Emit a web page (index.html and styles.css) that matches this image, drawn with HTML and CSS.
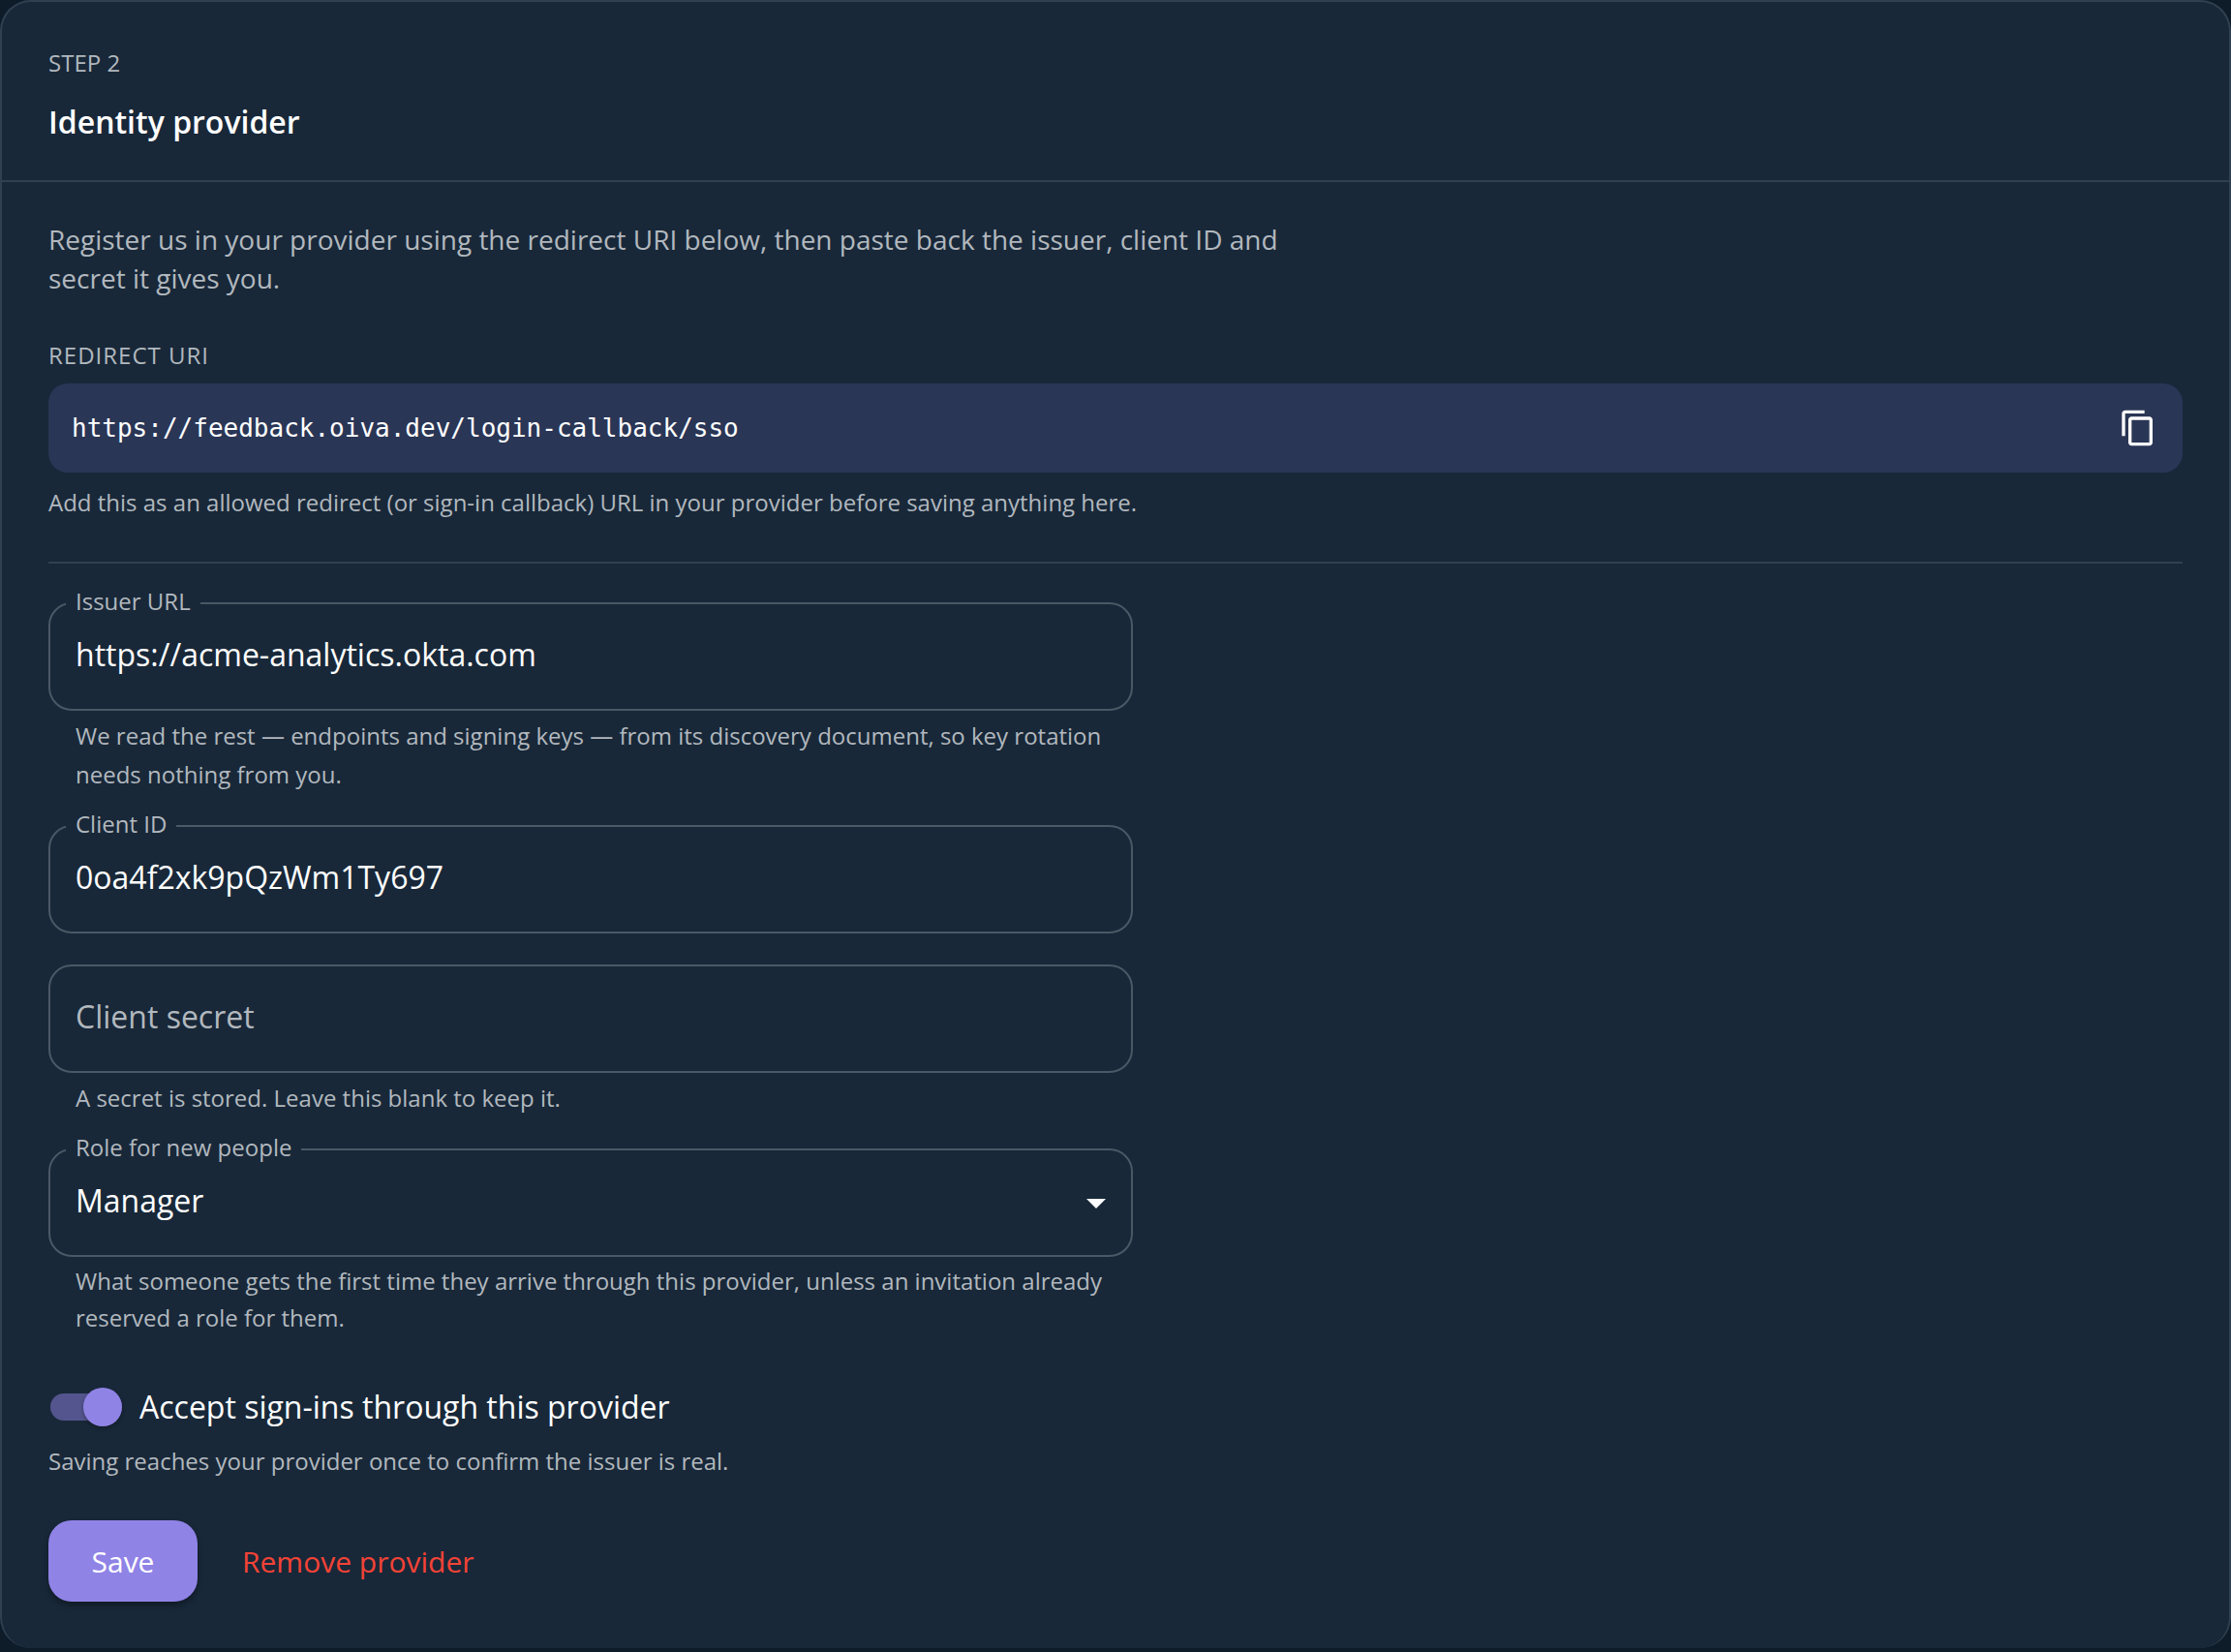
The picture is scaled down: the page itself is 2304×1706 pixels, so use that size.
FILE: index.html
```html
<!DOCTYPE html>
<html lang="en">
<head>
    <meta charset="UTF-8">
    <meta name="viewport" content="width=device-width, initial-scale=1.0">
    <link rel="stylesheet" href="styles.css">
    <title>Identity provider</title>
</head>
<body>
    <main class="card">
        <header class="cardHeader">
            <p class="step">STEP 2</p>
            <h1 class="title">Identity provider</h1>
        </header>

        <form class="cardBody">
            <p class="intro">Register us in your provider using the redirect URI below, then paste back the issuer, client ID and secret it gives you.</p>

            <section class="redirect">
                <h2 class="redirectLabel">REDIRECT URI</h2>
                <div class="redirectBox">
                    <code class="redirectUri">https://feedback.oiva.dev/login-callback/sso</code>
                    <button type="button" class="copyButton" aria-label="Copy">
                        <svg class="copyIcon" viewBox="0 0 24 24" fill="currentColor">
                            <path d="M16 1H4c-1.100 0-2 .9-2 2v14h2V3h12V1zm3 4H8c-1.100 0-2 .9-2 2v14c0 1.100.9 2 2 2h11c1.100 0 2-.9 2-2V7c0-1.100-.9-2-2-2zm0 16H8V7h11v14z"/>
                        </svg>
                    </button>
                </div>
                <p class="note">Add this as an allowed redirect (or sign-in callback) URL in your provider before saving anything here.</p>
            </section>

            <hr class="divider">

            <div class="fields">
                <div class="field">
                    <label class="fieldLabel" for="issuer">Issuer URL</label>
                    <input class="fieldInput" type="text" id="issuer" value="https://acme-analytics.okta.com">
                    <p class="helper helperTall">We read the rest — endpoints and signing keys — from its discovery document, so key rotation needs nothing from you.</p>
                </div>
                <div class="field">
                    <label class="fieldLabel" for="clientId">Client ID</label>
                    <input class="fieldInput" type="text" id="clientId" value="0oa4f2xk9pQzWm1Ty697">
                </div>
                <div class="field">
                    <input class="fieldInput" type="password" aria-label="Client secret" placeholder="Client secret">
                    <p class="helper helperTall">A secret is stored. Leave this blank to keep it.</p>
                </div>
                <div class="field">
                    <label class="fieldLabel" for="role">Role for new people</label>
                    <select class="fieldInput" id="role">
                        <option>Manager</option>
                    </select>
                    <svg class="arrow" viewBox="0 0 20 10" fill="currentColor">
                        <path d="M0 0h20L10 10z"/>
                    </svg>
                    <p class="helper">What someone gets the first time they arrive through this provider, unless an invitation already reserved a role for them.</p>
                </div>
            </div>

            <label class="switchRow">
                <input class="switch" type="checkbox" role="switch" checked>
                <span>Accept sign-ins through this provider</span>
            </label>
            <p class="note">Saving reaches your provider once to confirm the issuer is real.</p>

            <div class="actions">
                <button type="button" class="button save">Save</button>
                <button type="button" class="button remove">Remove provider</button>
            </div>
        </form>
    </main>
</body>
</html>
```
FILE: styles.css
```css
* {
    box-sizing: border-box;
}

body {
    margin: 0;
    background-color: #0e1b28;
    color: #ffffff;
    font-family: "Open Sans", "Noto Sans", sans-serif;
    font-size: 32px;
}

h1,
h2,
p {
    margin: 0;
    font-weight: 400;
}

button,
input,
select {
    font-family: inherit;
    color: inherit;
}

.card {
    background-color: #182839;
    border: 2px solid #2f4150;
    border-bottom: none;
    border-radius: 32px;
}

.cardHeader {
    padding: 42px 48px 36px;
    border-bottom: 2px solid #2f4150;
}

.step {
    color: #b2b8be;
    font-size: 24px;
    line-height: 42px;
}

.cardHeader .title {
    margin-top: 16px;
    font-size: 32px;
    font-weight: 600;
    line-height: 48px;
}

.cardBody {
    padding: 39px 48px 48px;
}

.intro {
    max-width: 1320px;
    color: #b2b8be;
    font-size: 28px;
    line-height: 40px;
}

.redirect {
    margin-top: 40px;
}

.redirectLabel {
    color: #b2b8be;
    font-size: 24px;
    letter-spacing: 1px;
    line-height: 40px;
}

.redirectBox {
    display: flex;
    align-items: center;
    justify-content: space-between;
    margin-top: 9px;
    padding: 16px;
    padding-left: 24px;
    background-color: #2a3656;
    border-radius: 20px;
}

.redirectUri {
    font-family: "DejaVu Sans Mono", monospace;
    font-size: 26px;
}

.copyButton {
    display: flex;
    padding: 10px;
    background: none;
    border: none;
}

.copyIcon {
    width: 40px;
    height: 40px;
}

.note {
    margin-top: 11px;
    color: #b2b8be;
    font-size: 24px;
    line-height: 40px;
}

.divider {
    height: 2px;
    margin: 41px 0 40px;
    background-color: #2f4150;
    border: none;
}

.fields {
    display: flex;
    flex-direction: column;
    gap: 32px;
    max-width: 1120px;
}

.field {
    position: relative;
}

.fieldLabel {
    position: absolute;
    top: -18px;
    left: 18px;
    padding: 0 10px;
    background-color: #182839;
    color: #b2b8be;
    font-size: 24px;
    line-height: 34px;
}

.fieldInput {
    display: block;
    width: 100%;
    height: 112px;
    padding: 0 26px 6px;
    appearance: none;
    background: none;
    border: 2px solid #4b5865;
    border-radius: 24px;
    font-size: 32px;
}

.fieldInput::placeholder {
    color: #b2b8be;
    opacity: 1;
}

.arrow {
    position: absolute;
    top: 52px;
    right: 28px;
    width: 20px;
    height: 10px;
    pointer-events: none;
}

.helper {
    padding: 6px 28px 0;
    color: #b2b8be;
    font-size: 24px;
    line-height: 38px;
}

.helperTall {
    line-height: 40px;
}

.switchRow {
    display: flex;
    align-items: center;
    gap: 18px;
    margin-top: 48px;
    padding-left: 2px;
    line-height: 50px;
}

.switch {
    display: flex;
    align-items: center;
    justify-content: flex-end;
    width: 74px;
    height: 28px;
    margin: 0;
    appearance: none;
    background-color: #54558e;
    border-radius: 14px;
}

.switch::before {
    content: "";
    width: 40px;
    height: 40px;
    background-color: #9083e6;
    border-radius: 50%;
    box-shadow: 0 2px 4px rgba(0, 0, 0, 0.3);
}

.actions {
    display: flex;
    gap: 16px;
    margin-top: 41px;
}

.button {
    height: 84px;
    background: none;
    border: none;
    border-radius: 24px;
    font-size: 30px;
}

.save {
    min-width: 154px;
    background-color: #9083e6;
    box-shadow: 0 4px 6px rgba(0, 0, 0, 0.35);
}

.remove {
    padding: 0 30px;
    color: #f44336;
}
```
